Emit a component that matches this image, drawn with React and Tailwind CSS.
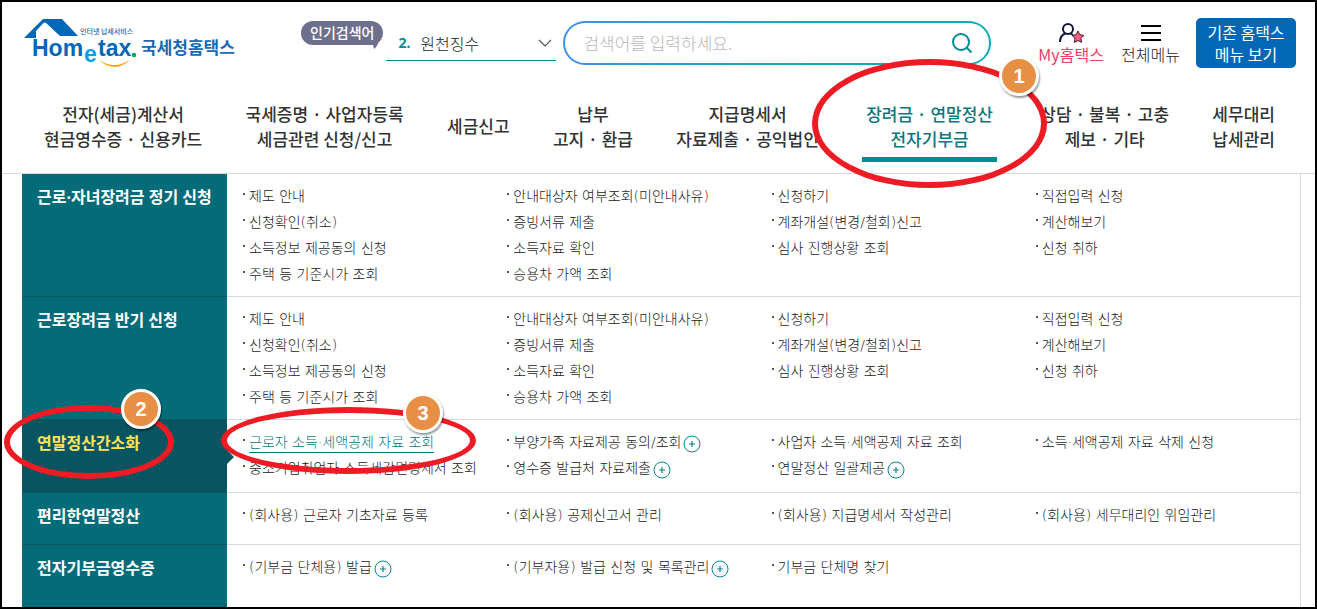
import React, { useState } from "react";

const navItems = [
    { lines: ["전자(세금)계산서", "현금영수증 · 신용카드"] },
    { lines: ["국세증명 · 사업자등록", "세금관련 신청/신고"] },
    { lines: ["세금신고"] },
    { lines: ["납부", "고지 · 환급"] },
    { lines: ["지급명세서", "자료제출 · 공익법인"] },
    { lines: ["장려금 · 연말정산", "전자기부금"], active: true },
    { lines: ["상담 · 불복 · 고충", "제보 · 기타"] },
    { lines: ["세무대리", "납세관리"] },
];

const incentiveColumns = [
    ["제도 안내", "신청확인(취소)", "소득정보 제공동의 신청", "주택 등 기준시가 조회"],
    ["안내대상자 여부조회(미안내사유)", "증빙서류 제출", "소득자료 확인", "승용차 가액 조회"],
    ["신청하기", "계좌개설(변경/철회)신고", "심사 진행상황 조회"],
    ["직접입력 신청", "계산해보기", "신청 취하"],
].map((column) => column.map((label) => ({ label })));

const menuRows = [
    { title: "근로·자녀장려금 정기 신청", height: "min-h-[122px]", columns: incentiveColumns },
    { title: "근로장려금 반기 신청", height: "min-h-[122px]", columns: incentiveColumns },
    {
        title: "연말정산간소화",
        height: "min-h-[72px]",
        active: true,
        columns: [
            [
                { label: "근로자 소득·세액공제 자료 조회", active: true },
                { label: "중소기업취업자 소득세감면명세서 조회" },
            ],
            [
                { label: "부양가족 자료제공 동의/조회", more: true },
                { label: "영수증 발급처 자료제출", more: true },
            ],
            [
                { label: "사업자 소득·세액공제 자료 조회" },
                { label: "연말정산 일괄제공", more: true },
            ],
            [{ label: "소득·세액공제 자료 삭제 신청" }],
        ],
    },
    {
        title: "편리한연말정산",
        height: "min-h-[51px]",
        columns: [
            [{ label: "(회사용) 근로자 기초자료 등록" }],
            [{ label: "(회사용) 공제신고서 관리" }],
            [{ label: "(회사용) 지급명세서 작성관리" }],
            [{ label: "(회사용) 세무대리인 위임관리" }],
        ],
    },
    {
        title: "전자기부금영수증",
        height: "min-h-[62px]",
        columns: [
            [{ label: "(기부금 단체용) 발급", more: true }],
            [{ label: "(기부자용) 발급 신청 및 목록관리", more: true }],
            [{ label: "기부금 단체명 찾기" }],
            [],
        ],
    },
];

const Logo = () => (
    <svg width="214" height="52" viewBox="22 18 214 52" role="img" aria-label="Hometax 국세청홈택스">
        <path d="M24 39 43 20H62L78 37H60L46 24Q44.500 23 43 24.500L36 32V39Z" fill="#0068b7" />
        <g fontFamily="'Liberation Sans', sans-serif" fontWeight="700">
            <text x="32" y="57" fontSize="23" fill="#0068b7">Hom</text>
            <text x="84" y="63" fontSize="23" fill="#00a0e9">e</text>
            <text x="98" y="57" fontSize="23" fill="#0068b7">tax</text>
        </g>
        <circle cx="134" cy="56" r="2.200" fill="#00a650" />
        <path d="M98 60Q114 72 131 60Q115 76 98 60Z" fill="#f9a51a" />
        <g fontFamily="'Noto Sans CJK KR', sans-serif" fill="#1b68b3">
            <text x="80" y="35" fontSize="7" fontWeight="500">인터넷 납세서비스</text>
            <text x="141" y="55" fontSize="17" fontWeight="700">국세청홈택스</text>
        </g>
    </svg>
);

const UserStarIcon = () => (
    <svg width="26" height="22" viewBox="0 0 26 22" aria-hidden="true">
        <g fill="none" stroke="#10163a" strokeWidth="2">
            <circle cx="10" cy="7" r="5" />
            <path d="M2 20C2 15 4.500 12.500 7.500 11.500M12.500 11.500 15 13" />
        </g>
        <path
            d="m20 9 1.800 3.800 4.100.600-3 2.900.700 4.100-3.600-1.900-3.700 1.900.700-4.100-3-2.900 4.100-.600z"
            fill="#ff5c7f"
            stroke="#3a1a2b"
            strokeWidth="1"
        />
    </svg>
);

const PlusCircle = () => (
    <svg className="mt-1 ml-0.5 shrink-0" width="18" height="18" viewBox="0 0 18 18" fill="none" stroke="#088491" aria-hidden="true">
        <circle cx="9" cy="9" r="8" />
        <path d="M6 9H12M9 6V12" strokeWidth="1.200" />
    </svg>
);

// Numbered marker that sits on the rim of a red ring
const StepBadge = ({ step, className }) => (
    <span
        className={`absolute z-20 flex size-10 items-center justify-center rounded-full border-[3px] border-white bg-[#e88f46] font-['Liberation_Sans',sans-serif] text-xl font-bold text-white shadow-[1px_2px_2px_rgba(0,0,0,0.4)] ${className}`}
    >
        {step}
    </span>
);

const Ring = ({ className }) => (
    <span className={`pointer-events-none absolute z-10 rounded-[50%] border-[6px] border-[#ed1c24] ${className}`} />
);

const Header = () => {
    const [keyword, setKeyword] = useState("");

    return (
        <header className="flex items-center pt-[15px] pr-[19px] pl-5">
            <a href="#home" className="mr-[65px] shrink-0">
                <Logo />
            </a>

            {/* Popular searches */}
            <label
                htmlFor="popular"
                className="relative mt-1 h-6 shrink-0 self-start rounded-full bg-[#6e6f8d] px-[9px] text-sm leading-[23px] font-medium text-white"
            >
                인기검색어
                <svg className="absolute right-1 -bottom-1" width="10" height="8" viewBox="0 0 10 8" aria-hidden="true">
                    <path d="M0 2 10 0Q8 6 5 8L4 4Z" fill="#6e6f8d" />
                </svg>
            </label>
            <div className="relative ml-[3px] flex h-9 w-[170px] shrink-0 items-center border-b border-[#008c95] pl-3">
                <span className="font-['Noto_Sans',sans-serif] text-sm font-bold text-[#008c95]">2.</span>
                <select
                    id="popular"
                    className="ml-[10px] w-full appearance-none bg-transparent text-base font-light text-[#222222]"
                >
                    <option>원천징수</option>
                </select>
                <svg className="pointer-events-none absolute right-1" width="14" height="8" viewBox="0 0 14 8" fill="none" stroke="#555555" strokeWidth="1.200" aria-hidden="true">
                    <path d="M1 1 7 7 13 1" />
                </svg>
            </div>

            <form className="ml-[7px] flex-1 rounded-full bg-linear-to-r from-[#3f92e4] to-[#0fabba] to-60% p-0.5">
                <div className="flex h-10 items-center rounded-full bg-white pr-4 pl-[18px]">
                    <input
                        type="text"
                        aria-label="검색어"
                        placeholder="검색어를 입력하세요."
                        value={keyword}
                        onChange={(e) => setKeyword(e.target.value)}
                        className="min-w-0 flex-1 text-[17px] font-light outline-none placeholder:text-[#b8b8b8]"
                    />
                    <button type="button" aria-label="검색">
                        <svg width="22" height="22" viewBox="0 0 22 22" fill="none" stroke="#058a96" strokeWidth="2" aria-hidden="true">
                            <circle cx="10" cy="10" r="8" />
                            <path d="m15.500 15.500 5 5" />
                        </svg>
                    </button>
                </div>
            </form>

            <a href="#my" className="ml-[46px] flex w-[68px] shrink-0 flex-col items-center text-base leading-5 text-[#ee3d63]">
                <UserStarIcon />
                <span>My홈택스</span>
            </a>
            <a href="#all" className="ml-4 flex shrink-0 flex-col items-center text-base leading-5 font-light text-[#222222]">
                <svg width="20" height="22" viewBox="0 0 20 22" stroke="#000000" strokeWidth="2" aria-hidden="true">
                    <path d="M0 4H20M0 11H20M0 18H20" />
                </svg>
                <span>전체메뉴</span>
            </a>
            <button
                type="button"
                className="ml-4 h-[50px] w-[100px] shrink-0 rounded-[5px] bg-[#0068b7] text-base leading-[22px] text-white"
            >
                기존 홈택스
                <br />
                메뉴 보기
            </button>
        </header>
    );
};

const MainNav = () => (
    <nav className="border-b border-[#d8d8d8] pt-8 pr-10 pb-[11px] pl-[42px]">
        <ul className="flex justify-between">
            {navItems.map((item) => (
                <li key={item.lines[0]} className={item.active ? "relative" : undefined}>
                    <a
                        href="#menu"
                        className={`flex h-[61px] flex-col text-center text-[17px] leading-[25px] font-medium whitespace-nowrap ${
                            item.active ? "border-b-[5px] border-[#008c95] px-1 text-[#0b7680]" : "text-[#333333]"
                        }`}
                    >
                        {item.lines.map((line) => (
                            <span key={line} className={item.lines.length === 1 ? "leading-[50px]" : undefined}>
                                {line}
                            </span>
                        ))}
                    </a>
                    {item.active && (
                        <>
                            <Ring className="-inset-x-[50px] -top-[42px] -bottom-[26px]" />
                            <StepBadge step={1} className="-top-[45px] -right-[42px]" />
                        </>
                    )}
                </li>
            ))}
        </ul>
    </nav>
);

const MenuLink = ({ item }) => (
    <li
        className={`flex h-[26px] items-center whitespace-nowrap before:mr-1 before:mb-1 before:size-0.5 before:bg-[#555555] ${
            item.active ? "relative" : ""
        }`}
    >
        <a
            href="#service"
            className={item.active ? "border-b border-[#0b7680] leading-5 text-[#0b7680]" : "leading-5 text-[#222222]"}
        >
            {item.label}
        </a>
        {item.more && <PlusCircle />}
        {item.active && (
            <>
                <Ring className="-top-[22px] -left-[22px] h-[67px] w-[255px]" />
                <StepBadge step={3} className="-top-9 left-40" />
            </>
        )}
    </li>
);

const MegaMenu = () => (
    <div className="mr-[14px] ml-5 border-r border-[#d8d8d8]">
        {menuRows.map((row, index) => {
            const last = index === menuRows.length - 1;
            return (
                <section key={row.title} className={`flex ${last ? "" : "border-b border-[#d8d8d8]"}`}>
                    <div
                        className={`relative w-[205px] shrink-0 pt-[10px] pl-[15px] ${
                            last ? "" : "-mb-px border-b border-[#0b5661]"
                        } ${row.active ? "bg-[#085460]" : "bg-[#036c78]"}`}
                    >
                        <h2
                            className={`font-['Noto_Sans','Noto_Sans_CJK_KR',sans-serif] text-base leading-[26px] font-bold whitespace-nowrap ${
                                row.active ? "text-[#ffe45c]" : "text-white"
                            }`}
                        >
                            {row.title}
                        </h2>
                        {row.active && (
                            <>
                                <svg className="absolute top-[30px] left-full" width="7" height="14" viewBox="0 0 7 14" aria-hidden="true">
                                    <path d="M0 0 7 7 0 14Z" fill="#085460" />
                                </svg>
                                <Ring className="-top-[15px] -left-[18px] h-[74px] w-[170px]" />
                                <StepBadge step={2} className="-top-[31px] left-[99px]" />
                            </>
                        )}
                    </div>
                    <div
                        className={`grid flex-1 grid-cols-4 py-[9px] pl-4 font-['DejaVu_Sans','Noto_Sans_CJK_KR',sans-serif] text-sm font-light ${row.height}`}
                    >
                        {row.columns.map((column, i) => (
                            <ul key={i}>
                                {column.map((item) => (
                                    <MenuLink key={item.label} item={item} />
                                ))}
                            </ul>
                        ))}
                    </div>
                </section>
            );
        })}
    </div>
);

const App = () => {
    return (
        <div className="overflow-hidden border-2 border-black bg-white font-['Noto_Sans_CJK_KR',sans-serif]">
            <Header />
            <MainNav />
            <MegaMenu />
        </div>
    );
};

export default App;
